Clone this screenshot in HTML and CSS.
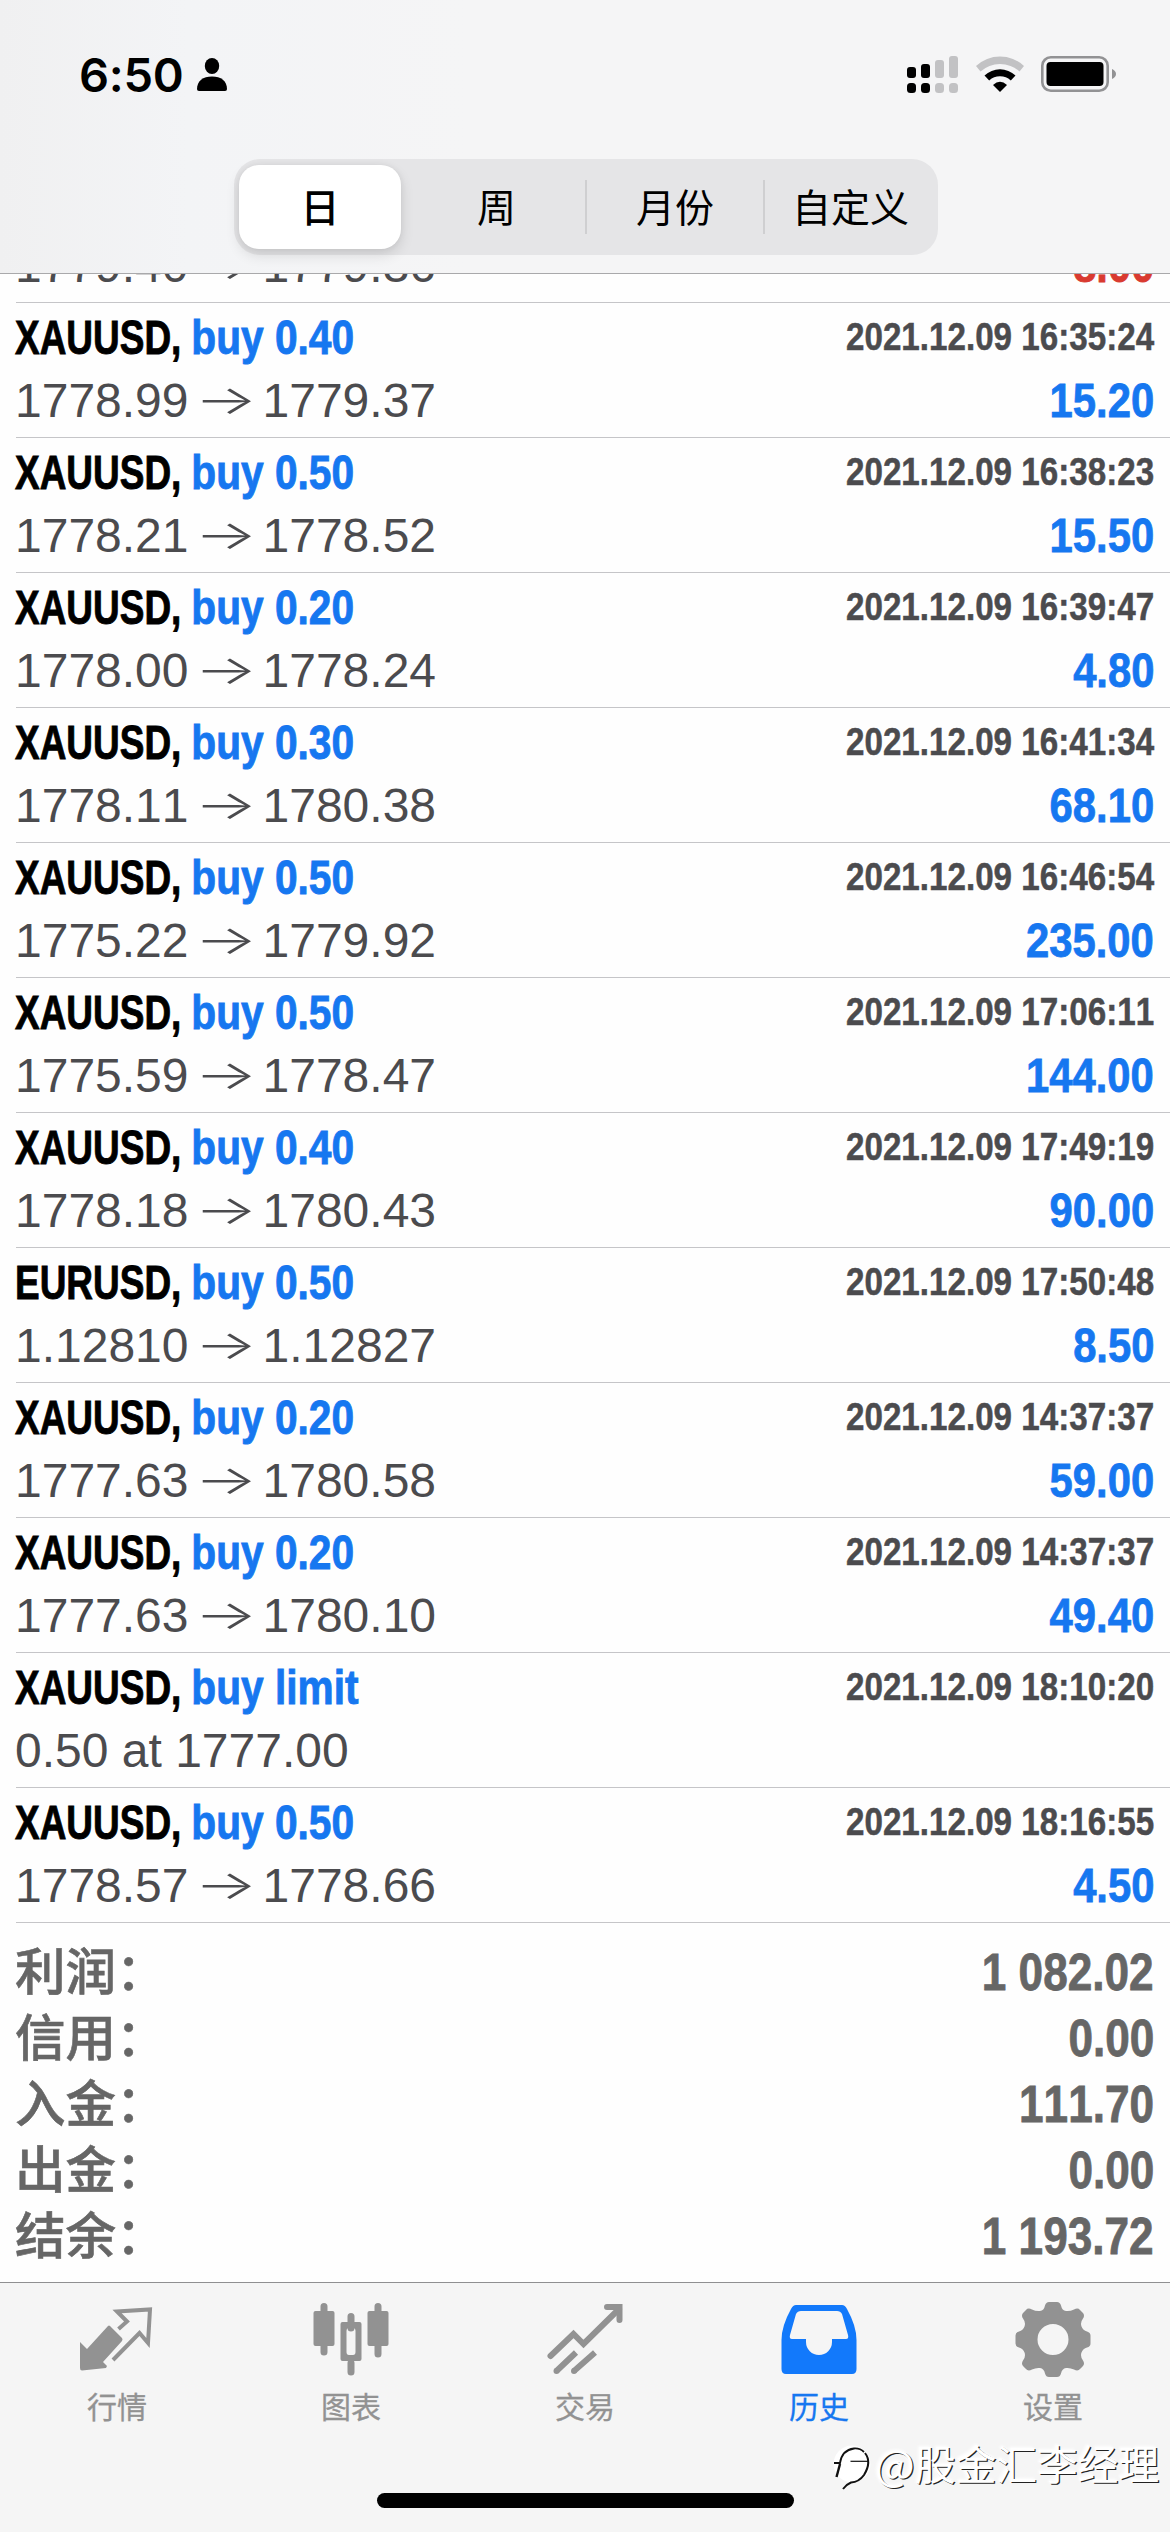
FILE: index.html
```html
<!DOCTYPE html>
<html lang="zh-CN">
<head>
<meta charset="utf-8">
<title>历史</title>
<link rel="stylesheet" href="styles.css">
</head>
<body>
<div class="screen">
  <header class="header">
    <div class="status">
      <div class="status-left">
        <span class="time">6:50</span>
        <svg class="person" width="30" height="33" viewBox="0 0 30 33"><ellipse cx="15" cy="8" rx="7.2" ry="8"/><path d="M0 31C0 23 6 18.500 15 18.500S30 23 30 31Q30 33 28 33H2Q0 33 0 31Z"/></svg>
      </div>
      <div class="status-right">
        <svg width="52" height="38" viewBox="0 0 52 38"><g><rect x="0" y="11" width="9" height="11" rx="3"/><rect x="14" y="8" width="9" height="14" rx="3"/><rect x="0" y="27" width="9" height="10" rx="3.500"/><rect x="14" y="27" width="9" height="10" rx="3.500"/></g><g fill="#c2c2c4"><rect x="28" y="4" width="9" height="18" rx="3"/><rect x="42" y="0" width="9" height="22" rx="3"/><rect x="28" y="27" width="9" height="10" rx="3.500"/><rect x="42" y="27" width="9" height="10" rx="3.500"/></g></svg>
        <svg class="wifi" width="50" height="38" viewBox="0 0 50 38"><path d="M1 10A35 35 0 0 1 49 10L44.500 15.500A29 29 0 0 0 5.500 15.500Z" fill="#c2c2c4"/><path d="M9.500 19.500A22.500 22.500 0 0 1 40.500 19.500L35.800 24.500A16 16 0 0 0 14.200 24.500Z"/><path d="M18 29Q25 22.500 32 29L25 36Z"/></svg>
        <svg width="76" height="38" viewBox="0 0 76 38"><rect x="1.300" y="1.300" width="65.400" height="33.400" rx="8.500" fill="none" stroke="#929294" stroke-width="2.600"/><rect x="5.500" y="6" width="57" height="24" rx="4"/><path d="M71 13Q75 15 75 18T71 23Z" fill="#929294"/></svg>
      </div>
    </div>
    <nav class="segments">
      <span class="seg seg-active">日</span><span class="seg">周</span><span class="seg ruled">月份</span><span class="seg ruled">自定义</span>
    </nav>
  </header>

  <main class="list">
    <div class="deal partial"><div class="line"><span class="price">1779.40<span class="arrow">→</span>1779.36</span><b class="profit loss">8.00</b></div></div>
    <div class="deal"><div class="line top"><b class="title">XAUUSD, <span class="side">buy 0.40</span></b><b class="date">2021.12.09 16:35:24</b></div><div class="line"><span class="price">1778.99<span class="arrow">→</span>1779.37</span><b class="profit">15.20</b></div></div>
    <div class="deal"><div class="line top"><b class="title">XAUUSD, <span class="side">buy 0.50</span></b><b class="date">2021.12.09 16:38:23</b></div><div class="line"><span class="price">1778.21<span class="arrow">→</span>1778.52</span><b class="profit">15.50</b></div></div>
    <div class="deal"><div class="line top"><b class="title">XAUUSD, <span class="side">buy 0.20</span></b><b class="date">2021.12.09 16:39:47</b></div><div class="line"><span class="price">1778.00<span class="arrow">→</span>1778.24</span><b class="profit">4.80</b></div></div>
    <div class="deal"><div class="line top"><b class="title">XAUUSD, <span class="side">buy 0.30</span></b><b class="date">2021.12.09 16:41:34</b></div><div class="line"><span class="price">1778.11<span class="arrow">→</span>1780.38</span><b class="profit">68.10</b></div></div>
    <div class="deal"><div class="line top"><b class="title">XAUUSD, <span class="side">buy 0.50</span></b><b class="date">2021.12.09 16:46:54</b></div><div class="line"><span class="price">1775.22<span class="arrow">→</span>1779.92</span><b class="profit">235.00</b></div></div>
    <div class="deal"><div class="line top"><b class="title">XAUUSD, <span class="side">buy 0.50</span></b><b class="date">2021.12.09 17:06:11</b></div><div class="line"><span class="price">1775.59<span class="arrow">→</span>1778.47</span><b class="profit">144.00</b></div></div>
    <div class="deal"><div class="line top"><b class="title">XAUUSD, <span class="side">buy 0.40</span></b><b class="date">2021.12.09 17:49:19</b></div><div class="line"><span class="price">1778.18<span class="arrow">→</span>1780.43</span><b class="profit">90.00</b></div></div>
    <div class="deal"><div class="line top"><b class="title">EURUSD, <span class="side">buy 0.50</span></b><b class="date">2021.12.09 17:50:48</b></div><div class="line"><span class="price">1.12810<span class="arrow">→</span>1.12827</span><b class="profit">8.50</b></div></div>
    <div class="deal"><div class="line top"><b class="title">XAUUSD, <span class="side">buy 0.20</span></b><b class="date">2021.12.09 14:37:37</b></div><div class="line"><span class="price">1777.63<span class="arrow">→</span>1780.58</span><b class="profit">59.00</b></div></div>
    <div class="deal"><div class="line top"><b class="title">XAUUSD, <span class="side">buy 0.20</span></b><b class="date">2021.12.09 14:37:37</b></div><div class="line"><span class="price">1777.63<span class="arrow">→</span>1780.10</span><b class="profit">49.40</b></div></div>
    <div class="deal"><div class="line top"><b class="title">XAUUSD, <span class="side">buy limit</span></b><b class="date">2021.12.09 18:10:20</b></div><div class="line"><span class="price">0.50 at 1777.00</span></div></div>
    <div class="deal"><div class="line top"><b class="title">XAUUSD, <span class="side">buy 0.50</span></b><b class="date">2021.12.09 18:16:55</b></div><div class="line"><span class="price">1778.57<span class="arrow">→</span>1778.66</span><b class="profit">4.50</b></div></div>
    <section class="summary">
      <div class="total"><span>利润：</span><b>1 082.02</b></div>
      <div class="total"><span>信用：</span><b>0.00</b></div>
      <div class="total"><span>入金：</span><b>111.70</b></div>
      <div class="total"><span>出金：</span><b>0.00</b></div>
      <div class="total"><span>结余：</span><b>1 193.72</b></div>
    </section>
  </main>

  <footer class="tabbar">
    <nav class="tabs">
      <div class="tab"><svg width="76" height="77" viewBox="0 0 76 77"><path d="M1 36L8 43 29 20Q30 19 31 20L43 32Q44 33.500 43 35L24 56 28 60 27 62 3 64.500Q1 64.500 1 62Z"/><path d="M39.500 23L48 15.500 38 5.500 71 3.500 69 37 60.500 27 34 54" fill="none" stroke="#929292" stroke-width="4"/></svg><span>行情</span></div>
      <div class="tab"><svg width="76" height="77" viewBox="0 0 76 77"><g stroke="#929292" stroke-width="7" stroke-linecap="round"><path d="M11 .500V46M65 .500V48M38 10.500V22M38 57V66"/></g><rect x=".500" y="5" width="21" height="35" rx="2"/><rect x="54.500" y="5" width="21" height="35" rx="2"/><path fill-rule="evenodd" d="M29.500 16H46.500Q48.500 16 48.500 18V53Q48.500 55 46.500 55H29.500Q27.500 55 27.500 53V18Q27.500 16 29.500 16ZM36 22Q33.500 22 33.500 25V46Q33.500 49 36 49H40Q42.500 49 42.500 46V25Q42.500 22 40 22Z"/></svg><span>图表</span></div>
      <div class="tab"><svg width="76" height="77" viewBox="0 0 76 77"><g fill="none" stroke="#929292" stroke-width="6" stroke-linecap="round"><path d="M3.500 50L26.500 28 36.500 38 72 3"/><path d="M60 1H72.500V14"/></g><path d="M29 46.500L9.500 65M48 46.500L27 65" stroke="#929292" stroke-width="6"/><circle cx="9.500" cy="65" r="3"/><circle cx="27" cy="65" r="3"/></svg><span>交易</span></div>
      <div class="tab active"><svg width="76" height="77" viewBox="0 0 76 77"><path fill-rule="evenodd" d="M15 -1H61Q64 -1 66 3 75.500 20 75.500 34V63Q75.500 68 71 68H5Q.500 68 .500 63V34Q.500 20 10 3 12 -1 15 -1ZM20 5Q16.500 5 15 8L9 29Q8 33 11 33H25V36A13 13 0 0 0 51 36V33H65Q68 33 67 29L61 8Q59.500 5 56 5Z"/></svg><span>历史</span></div>
      <div class="tab"><svg width="76" height="77" viewBox="0 0 76 77"><g transform="translate(38 33.500)"><path fill-rule="evenodd" d="M-4 -37.500H4Q7 -37.500 8 -34 9 -29 13 -28.500 17 -28 21 -30 25 -32 27 -29.500L30 -26.500Q32 -24 30 -21 27 -17 28.500 -13 30 -9 34 -8 37.500 -7 37.500 -4V4Q37.500 7 34 8 30 9 28.500 13 27 17 30 21 32 24 30 26.500L27 29.500Q25 32 21 30 17 28 13 28.500 9 29 8 34 7 37.500 4 37.500H-4Q-7 37.500 -8 34 -9 29 -13 28.500 -17 28 -21 30 -25 32 -27 29.500L-30 26.500Q-32 24 -30 21 -27 17 -28.500 13 -30 9 -34 8 -37.500 7 -37.500 4V-4Q-37.500 -7 -34 -8 -30 -9 -28.500 -13 -27 -17 -30 -21 -32 -24 -30 -26.500L-27 -29.500Q-25 -32 -21 -30 -17 -28 -13 -28.500 -9 -29 -8 -34 -7 -37.500 -4 -37.500ZM0 -15.500A15.500 15.500 0 1 0 0 15.500A15.500 15.500 0 1 0 0 -15.500Z"/></g></svg><span>设置</span></div>
    </nav>
    <div class="home"></div>
  </footer>
  <div class="watermark">
    <svg width="45" height="54" viewBox="0 0 45 54"><circle cx="22" cy="27" r="18.500" fill="#fff"/><g fill="none" stroke="#111"><path d="M4 26H10Q12 13 24 11.500 30 11 34 15" stroke-width="1.800"/><path d="M35 16Q42 25 34 38 29 45 21 45.500 17 47 13 52" stroke-width="2"/><path d="M20.500 24.300H38" stroke-width="1.200"/><path d="M10 27L6.500 40" stroke-width="2.400"/></g></svg>
    <span class="at">@</span><span>股金汇李经理</span>
  </div>
</div>
</body>
</html>
```

FILE: styles.css
```css
* { box-sizing: border-box; }
body { margin: 0; background: #fff; font-family: "Liberation Sans", "Noto Sans CJK SC", sans-serif; font-kerning: none; }
svg { display: block; overflow: visible; }
.screen { position: relative; width: 1170px; height: 2532px; display: flex; flex-direction: column; overflow: hidden; background: #fefefe; }

.header { height: 274px; flex: none; background: linear-gradient(90deg, #f0f0f1, #f3f4f6 16%, #f5f5f6 40%); border-bottom: 1px solid #a9a9ab; display: flex; flex-direction: column; }
.status { height: 159px; padding: 47px 53px 0 79px; display: flex; justify-content: space-between; align-items: flex-start; }
.status-left, .status-right { display: flex; align-items: flex-start; }
.time { font: 600 47px/56px Inter, sans-serif; width: 118px; letter-spacing: -0.3px; }
.person { margin-top: 11px; }
.status-right { padding-top: 9px; }
.wifi { margin: 0 16px; }
.segments { align-self: flex-start; margin-left: 234px; width: 704px; height: 96px; padding: 6px 2px 6px 5px; border-radius: 26px; background: #e5e5e7; display: grid; grid-template-columns: 162px 184px 178px 173px; align-items: center; }
.seg { height: 54px; font: 400 39px/50px "Noto Sans CJK SC", sans-serif; text-align: center; }
.seg:nth-child(2) { padding-left: 7px; }
.seg-active { height: 84px; line-height: 80px; font-weight: 500; background: #fff; border-radius: 20px; box-shadow: 0 6px 14px rgba(0,0,0,.12), 0 0 6px rgba(0,0,0,.06); }
.ruled { border-left: 2px solid #cfcfd1; }

.list { flex: 1; min-height: 0; overflow: hidden; padding-left: 16px; }
.deal { height: 135px; padding-right: 16px; border-bottom: 1px solid #c5c5c8; }
.partial { height: 69px; margin-top: -40px; }
.line { height: 63px; display: flex; justify-content: space-between; line-height: 63px; white-space: nowrap; }
.top { height: 66px; line-height: 70px; }
.title { font-size: 48px; transform: scaleX(.77); transform-origin: left; color: #000; -webkit-text-stroke: .9px; margin-left: -1px; }
.side { display: inline-block; transform: scaleX(1.1); transform-origin: left; color: #1677f0; }
.date { font-size: 39px; transform: scaleX(.851); transform-origin: right; color: #4b4b4e; -webkit-text-stroke: .5px; position: relative; top: -1px; }
.price { font-size: 48px; color: #4b4b4e; margin-left: -1px; }
.arrow { display: inline-block; width: 74px; text-align: center; font: 300 40px/50px Inter, sans-serif; vertical-align: 3px; transform: scaleX(1.65); }
.profit { font-size: 48px; transform: scaleX(.87); transform-origin: right; color: #1677f0; -webkit-text-stroke: .8px; }
.loss { color: #d93a30; }

.summary { padding: 17px 16px 0 0; }
.total { height: 66px; line-height: 65px; display: flex; justify-content: space-between; color: #666; }
.total span { font: 500 50.500px/57px "Noto Sans CJK SC", sans-serif; margin-left: -1px; -webkit-text-stroke: .6px; }
.total b { font-size: 51px; transform: scaleX(.865); transform-origin: right; -webkit-text-stroke: .8px; }

.tabbar { height: 250px; flex: none; background: #f5f5f5; border-top: 1px solid #8f8f91; display: flex; flex-direction: column; align-items: center; }
.tabs { height: 210px; width: 1170px; display: grid; grid-template-columns: repeat(5, 1fr); padding-top: 23px; }
.tab { display: flex; flex-direction: column; align-items: center; color: #929292; fill: #929292; font: 400 30px/44px "Noto Sans CJK SC", sans-serif; -webkit-text-stroke: .3px; }
.active { color: #1677f0; fill: #1279fb; }
.home { width: 417px; height: 15px; border-radius: 8px; background: #000; }

.watermark { position: absolute; left: 830px; top: 2437px; display: flex; align-items: flex-start; color: #fff; font: 400 40.700px/52px "Noto Sans CJK SC", sans-serif; text-shadow: 1.200px 1.200px 0 #222, -1px -1px 3px #fff; white-space: nowrap; }
.at { width: 40px; font-size: 42px; }
```
